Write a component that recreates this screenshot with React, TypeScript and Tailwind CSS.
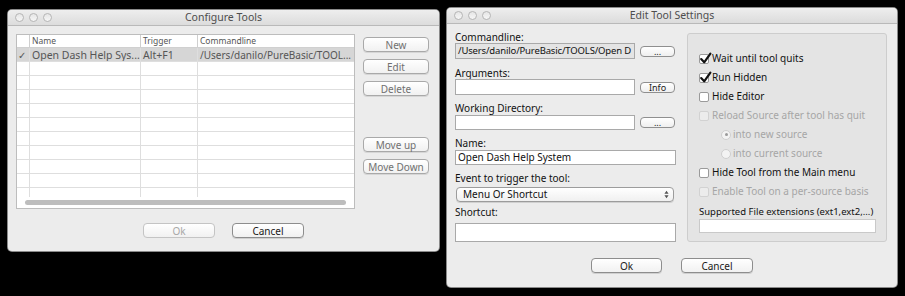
const font = "font-['Lucida_Grande','Noto_Sans',sans-serif]";

function TitleBar({ title }: { title: string }) {
  return (
    <div className="relative flex h-4 items-center justify-center rounded-t-[4px] border-b border-[#b9b9b9] bg-gradient-to-b from-[#eeeeee] to-[#dcdcdc]">
      <div className="absolute left-[7px] top-[3px] flex gap-[5px]">
        {[0, 1, 2].map((i) => (
          <span
            key={i}
            className="h-[9px] w-[9px] rounded-full border border-[#b5b5b5] bg-gradient-to-b from-[#e6e6e6] to-[#f6f6f6]"
          />
        ))}
      </div>
      <span className="text-[10.5px] text-[#4d4d4d]">{title}</span>
    </div>
  );
}

function Btn({
  label,
  w,
  tone = "normal",
  className = "",
}: {
  label: string;
  w: string;
  tone?: "normal" | "grey" | "off";
  className?: string;
}) {
  const toneCls =
    tone === "off"
      ? "border-[#c4c4c4] text-[#a8a8a8]"
      : tone === "grey"
        ? "border-[#a9a9a9] text-[#707070] shadow-[0_1px_0_#d6d6d6]"
        : "border-[#8d8d8d] text-[#1a1a1a] shadow-[0_1px_0_#cfcfcf]";
  return (
    <div
      className={`flex h-[15px] items-center justify-center rounded-[4px] border bg-gradient-to-b from-[#ffffff] to-[#f1f1f1] text-[10px] leading-none ${w} ${toneCls} ${className}`}
    >
      {label}
    </div>
  );
}

function SmallBtn({ label }: { label: string }) {
  return (
    <div className="flex h-[11px] w-[35px] shrink-0 items-center justify-center rounded-[4px] border border-[#8f8f8f] bg-gradient-to-b from-[#ffffff] to-[#efefef] text-[9px] leading-none text-[#222]">
      {label}
    </div>
  );
}

function Check({
  label,
  checked,
  disabled,
}: {
  label: string;
  checked?: boolean;
  disabled?: boolean;
}) {
  return (
    <div className="flex h-[19px] items-center gap-[3px]">
      <span
        className={`relative h-[10px] w-[10px] shrink-0 rounded-[2px] border ${
          disabled ? "border-[#d2d2d2] bg-[#ececec]" : "border-[#9a9a9a] bg-white"
        }`}
      >
        {checked && (
          <svg
            viewBox="0 0 12 12"
            className="absolute -left-[1px] -top-[3px] h-[13px] w-[13px]"
          >
            <path
              d="M2 6.5 L4.8 9.5 L10.5 1.5"
              fill="none"
              stroke="#111"
              strokeWidth="2"
              strokeLinecap="round"
              strokeLinejoin="round"
            />
          </svg>
        )}
      </span>
      <span className={`whitespace-nowrap text-[10px] ${disabled ? "text-[#a6a6a6]" : "text-[#111]"}`}>
        {label}
      </span>
    </div>
  );
}

function Radio({ label, on }: { label: string; on?: boolean }) {
  return (
    <div className="flex h-[19px] items-center gap-[2px] pl-[22px]">
      <span className="flex h-[10px] w-[10px] items-center justify-center rounded-full border border-[#cfcfcf] bg-[#f3f3f3]">
        {on && <span className="h-[3px] w-[3px] rounded-full bg-[#9a9a9a]" />}
      </span>
      <span className="whitespace-nowrap text-[10px] text-[#a6a6a6]">{label}</span>
    </div>
  );
}

function ConfigureTools() {
  const rows = Array.from({ length: 11 });
  return (
    <div className="mt-[10px] h-[241px] w-[431px] rounded-[4px] bg-[#ececec] shadow-[0_0_0_1px_#8a8a8a]">
      <TitleBar title="Configure Tools" />
      <div className="flex gap-2 px-2 pt-2">
        <div className="relative h-[175px] w-[339px] overflow-hidden border border-[#bdbdbd] bg-white">
          <div className="flex h-[13px] border-b border-[#d0d0d0] text-[8.5px] leading-[12px] text-[#555]">
            <div className="w-[12px]" />
            <div className="w-[111px] border-l border-[#cfcfcf] pl-[2px]">Name</div>
            <div className="w-[57px] border-l border-[#cfcfcf] pl-[2px]">Trigger</div>
            <div className="flex-1 border-l border-[#cfcfcf] pl-[2px]">Commandline</div>
          </div>
          {rows.map((_, i) => (
            <div
              key={i}
              className={`flex h-[14px] border-b border-[#dedede] text-[10.5px] leading-[14px] ${
                i === 0 ? "bg-[#d6d6d6] text-[#555]" : ""
              }`}
            >
              <div className="w-[12px] pl-[1px] text-[10px]">{i === 0 ? "✓" : ""}</div>
              <div className="w-[111px] overflow-hidden whitespace-nowrap border-l border-[#dedede] pl-[2px]">
                {i === 0 ? "Open Dash Help Sys..." : ""}
              </div>
              <div className="w-[57px] border-l border-[#dedede] pl-[2px]">
                {i === 0 ? "Alt+F1" : ""}
              </div>
              <div className="flex-1 overflow-hidden whitespace-nowrap border-l border-[#dedede] pl-[2px] text-[10px]">
                {i === 0 ? "/Users/danilo/PureBasic/TOOL..." : ""}
              </div>
            </div>
          ))}
          <div className="absolute bottom-0 left-0 right-0 flex h-[11px] items-center bg-white px-2">
            <div className="h-[5px] w-full rounded-full bg-[#bdbdbd]" />
          </div>
        </div>
        <div className="flex flex-col pt-[3px]">
          <Btn label="New" w="w-[66px]" tone="grey" />
          <Btn label="Edit" w="w-[66px]" tone="grey" className="mt-[7px]" />
          <Btn label="Delete" w="w-[66px]" tone="grey" className="mt-[7px]" />
          <Btn label="Move up" w="w-[66px]" tone="grey" className="mt-[41px]" />
          <Btn label="Move Down" w="w-[66px]" tone="grey" className="mt-[7px]" />
        </div>
      </div>
      <div className="mt-[14px] flex justify-center gap-[17px]">
        <Btn label="Ok" w="w-[72px]" tone="off" />
        <Btn label="Cancel" w="w-[72px]" />
      </div>
    </div>
  );
}

function Field({ value, className = "", grey }: { value?: string; className?: string; grey?: boolean }) {
  return (
    <div
      className={`flex shrink-0 items-center overflow-hidden whitespace-nowrap border border-[#a9a9a9] px-[2px] text-[#111] ${
        grey ? "bg-[#e4e4e4]" : "bg-white"
      } ${className}`}
    >
      {value}
    </div>
  );
}

function Label({ text, className = "" }: { text: string; className?: string }) {
  return <div className={`text-[10px] leading-[12px] text-[#111] ${className}`}>{text}</div>;
}

function EditToolSettings() {
  return (
    <div className="mt-[8px] h-[279px] w-[450px] rounded-[4px] bg-[#ececec] shadow-[0_0_0_1px_#8a8a8a]">
      <TitleBar title="Edit Tool Settings" />
      <div className="flex items-start gap-[10px] pl-2 pt-[7px]">
        <div className="flex w-[222px] shrink-0 flex-col">
          <Label text="Commandline:" />
          <div className="flex items-center gap-[5px]">
            <Field
              grey
              value="/Users/danilo/PureBasic/TOOLS/Open D"
              className="h-[16px] w-[180px] text-[9.5px] tracking-[-0.15px]"
            />
            <SmallBtn label="..." />
          </div>
          <Label text="Arguments:" className="mt-[8px]" />
          <div className="flex items-center gap-[5px]">
            <Field className="h-[16px] w-[180px]" />
            <SmallBtn label="Info" />
          </div>
          <Label text="Working Directory:" className="mt-[7px]" />
          <div className="mt-[1px] flex items-center gap-[5px]">
            <Field className="h-[15px] w-[180px]" />
            <SmallBtn label="..." />
          </div>
          <Label text="Name:" className="mt-[7px]" />
          <Field value="Open Dash Help System" className="mt-[1px] h-[15px] w-[221px] text-[10px]" />
          <Label text="Event to trigger the tool:" className="mt-[7px]" />
          <div className="ml-[1px] mt-[3px] flex h-[15px] w-[218px] items-center justify-between rounded-[4px] border border-[#9c9c9c] bg-gradient-to-b from-[#ffffff] to-[#f0f0f0] pl-[6px] pr-[4px] text-[10px] text-[#111] shadow-[0_1px_0_#d0d0d0]">
            <span>Menu Or Shortcut</span>
            <svg viewBox="0 0 6 10" className="h-[9px] w-[5px]">
              <path d="M3 0.5 L5.5 4 L0.5 4 Z M3 9.5 L5.5 6 L0.5 6 Z" fill="#555" />
            </svg>
          </div>
          <Label text="Shortcut:" className="mt-[4px]" />
          <Field className="mt-[5px] h-[19px] w-[221px]" />
        </div>
        <div className="mt-[2px] h-[209px] w-[200px] shrink-0 rounded-[3px] border border-[#cdcdcd] bg-[#e4e4e4] pl-[11px] pt-[15px]">
          <Check label="Wait until tool quits" checked />
          <Check label="Run Hidden" checked />
          <Check label="Hide Editor" />
          <Check label="Reload Source after tool has quit" disabled />
          <Radio label="into new source" on />
          <Radio label="into current source" />
          <Check label="Hide Tool from the Main menu" />
          <Check label="Enable Tool on a per-source basis" disabled />
          <div className="mt-[4px] whitespace-nowrap text-[9.5px] leading-[13px] text-[#111]">
            Supported File extensions (ext1,ext2,...)
          </div>
          <div className="mt-[1px] h-[14px] w-[177px] border border-[#c9c9c9] bg-white" />
        </div>
      </div>
      <div className="mt-[16px] flex justify-center gap-[19px]">
        <Btn label="Ok" w="w-[71px]" />
        <Btn label="Cancel" w="w-[72px]" />
      </div>
    </div>
  );
}

export default function App() {
  return (
    <div className={`flex h-[296px] w-[905px] items-start gap-2 bg-black pl-2 ${font}`}>
      <ConfigureTools />
      <EditToolSettings />
    </div>
  );
}
